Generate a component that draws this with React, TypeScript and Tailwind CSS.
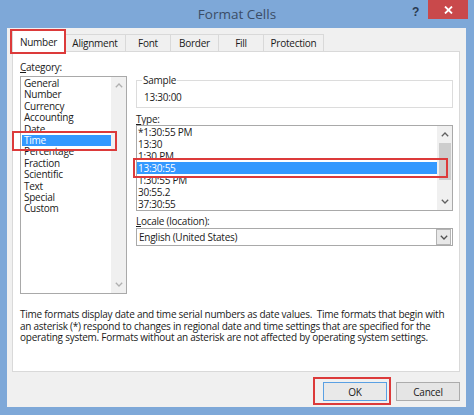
import React from "react";

const Chevron = ({ dir, color }: { dir: "up" | "down"; color: string }) => (
  <svg width="8" height="5" viewBox="0 0 8 5">
    <path
      d={dir === "up" ? "M0.8 4.2 L4 1 L7.2 4.2" : "M0.8 0.8 L4 4 L7.2 0.8"}
      fill="none"
      stroke={color}
      strokeWidth="1.3"
    />
  </svg>
);

const categories = [
  "General",
  "Number",
  "Currency",
  "Accounting",
  "Date",
  "Time",
  "Percentage",
  "Fraction",
  "Scientific",
  "Text",
  "Special",
  "Custom",
];

const types = ["*1:30:55 PM", "13:30", "1:30 PM", "13:30:55", "1:30:55 PM", "30:55.2", "37:30:55"];

const tabs: { label: string; w: string }[] = [
  { label: "Alignment", w: "w-[62px]" },
  { label: "Font", w: "w-[46px]" },
  { label: "Border", w: "w-[49px]" },
  { label: "Fill", w: "w-[46px]" },
  { label: "Protection", w: "w-[61px]" },
];

export default function App() {
  return (
    <div className="relative w-[474px] h-[415px] bg-[#7ea8d8] flex flex-col overflow-hidden font-['Segoe_UI','Open_Sans',sans-serif] text-[10px] tracking-[-0.25px] text-[#1a1a1a]">
      {/* Title bar */}
      <div className="h-[28px] grid grid-cols-[1fr_auto_1fr] items-start">
        <div />
        <div className="pt-[4px] text-[13.5px] tracking-normal leading-[20px] text-[#3b4d66]">Format Cells</div>
        <div className="flex justify-end items-start">
          <span className="mt-[4px] mr-[9px] text-[12px] leading-[16px] font-bold text-[#2a3a50] font-['Liberation_Sans',sans-serif]">
            ?
          </span>
          <div className="w-[40px] h-[19px] mr-[6px] bg-[#c9494b] flex items-center justify-center">
            <svg width="9" height="8" viewBox="0 0 9 8">
              <path d="M1 0.5 L8 7.5 M8 0.5 L1 7.5" stroke="#ffffff" strokeWidth="1.8" />
            </svg>
          </div>
        </div>
      </div>

      {/* Client area */}
      <div className="ml-[7px] mr-[8px] mb-[8px] flex-1 bg-[#f0f0f0] flex flex-col">
        {/* Tabs */}
        <div className="h-[23px] flex items-end pl-[5px]">
          <div className="relative z-10 -mb-px w-[53px] h-[22px] bg-white border border-b-0 border-[#d9d9d9] flex items-center justify-center leading-[12px]">
            Number
          </div>
          {tabs.map((t) => (
            <div
              key={t.label}
              className={`${t.w} h-[17px] -ml-px first:ml-0 bg-[#f0f0f0] border border-b-0 border-[#d9d9d9] flex items-center justify-center leading-[12px]`}
            >
              {t.label}
            </div>
          ))}
        </div>

        {/* Tab panel */}
        <div className="ml-[5px] mr-[6px] h-[321px] bg-white border border-[#d9d9d9] flex flex-col">
          <div className="flex pl-[7px] pr-[6px] gap-[9px]">
            {/* Category */}
            <div className="w-[107px] flex flex-col pt-[9px]">
              <div className="h-[12px] leading-[12px]">
                <u>C</u>ategory:
              </div>
              <div className="mt-[3px] h-[218px] border border-[#a9a9a9] flex">
                <div className="flex-1 flex flex-col pl-[1px] pt-px">
                  {categories.map((c) => (
                    <div
                      key={c}
                      className={`h-[11.4px] leading-[11.4px] px-[2px] ${c === "Time" ? "bg-[#3399ff] text-white" : ""}`}
                    >
                      {c}
                    </div>
                  ))}
                </div>
                <div className="w-[15px] bg-[#f0f0f0] flex flex-col justify-between items-center py-[6px]">
                  <Chevron dir="up" color="#b0b0b0" />
                  <Chevron dir="down" color="#b0b0b0" />
                </div>
              </div>
            </div>

            {/* Right column */}
            <div className="w-[317px] flex flex-col pt-[22px]">
              <fieldset className="h-[34px] border border-[#dcdcdc]">
                <legend className="ml-[5px] px-[1px] h-[12px] leading-[12px]">Sample</legend>
                <div className="mt-[5px] pl-[7px] h-[12px] leading-[12px]">13:30:00</div>
              </fieldset>

              <div className="mt-[5px] h-[12px] leading-[12px]">
                <u>T</u>ype:
              </div>
              <div className="h-[86px] border border-[#a9a9a9] flex">
                <div className="flex-1 flex flex-col">
                  {types.map((t) => (
                    <div
                      key={t}
                      className={`h-[12px] leading-[12px] pl-[1px] ${t === "13:30:55" ? "bg-[#3399ff] text-white" : ""}`}
                    >
                      {t}
                    </div>
                  ))}
                </div>
                <div className="w-[15px] bg-[#f0f0f0] flex flex-col items-center">
                  <div className="h-[17px] flex items-center justify-center">
                    <Chevron dir="up" color="#606060" />
                  </div>
                  <div className="w-[12px] h-[37px] bg-[#cdcdcd]" />
                  <div className="flex-1 flex items-end justify-center pb-[6px]">
                    <Chevron dir="down" color="#606060" />
                  </div>
                </div>
              </div>

              <div className="mt-[4px] h-[12px] leading-[12px]">
                <u>L</u>ocale (location):
              </div>
              <div className="mt-[1px] h-[18px] border border-[#a9a9a9] flex items-center">
                <div className="flex-1 pl-[2px] leading-[12px]">English (United States)</div>
                <div className="w-[15px] h-[16px] mr-[1px] bg-[#e8e8e8] border border-[#b4b4b4] flex items-center justify-center">
                  <Chevron dir="down" color="#505050" />
                </div>
              </div>
            </div>
          </div>

          <p className="mt-[15px] pl-[7px] pr-[2px] leading-[11.7px] whitespace-nowrap">
            Time formats display date and time serial numbers as date values.&nbsp; Time formats that begin with
            <br />
            an asterisk (*) respond to changes in regional date and time settings that are specified for the
            <br />
            operating system. Formats without an asterisk are not affected by operating system settings.
          </p>
        </div>

        {/* Buttons */}
        <div className="mt-[10px] flex justify-end gap-[9px] pr-[6px]">
          <div className="w-[64px] h-[19px] bg-[#e9e9e9] border border-[#5aa0e3] flex items-center justify-center leading-[12px]">
            OK
          </div>
          <div className="w-[64px] h-[19px] bg-[#e5e5e5] border border-[#acacac] flex items-center justify-center leading-[12px]">
            Cancel
          </div>
        </div>
      </div>

      {/* Red annotation boxes */}
      <div className="absolute left-[10px] top-[29px] w-[56px] h-[25px] border-2 border-[#dc3a3a] z-20" />
      <div className="absolute left-[12px] top-[131px] w-[105px] h-[20px] border-2 border-[#dc3a3a] z-20" />
      <div className="absolute left-[133px] top-[158px] w-[315px] h-[20px] border-2 border-[#dc3a3a] z-20" />
      <div className="absolute left-[313px] top-[377px] w-[78px] h-[28px] border-2 border-[#dc3a3a] z-20" />
    </div>
  );
}
